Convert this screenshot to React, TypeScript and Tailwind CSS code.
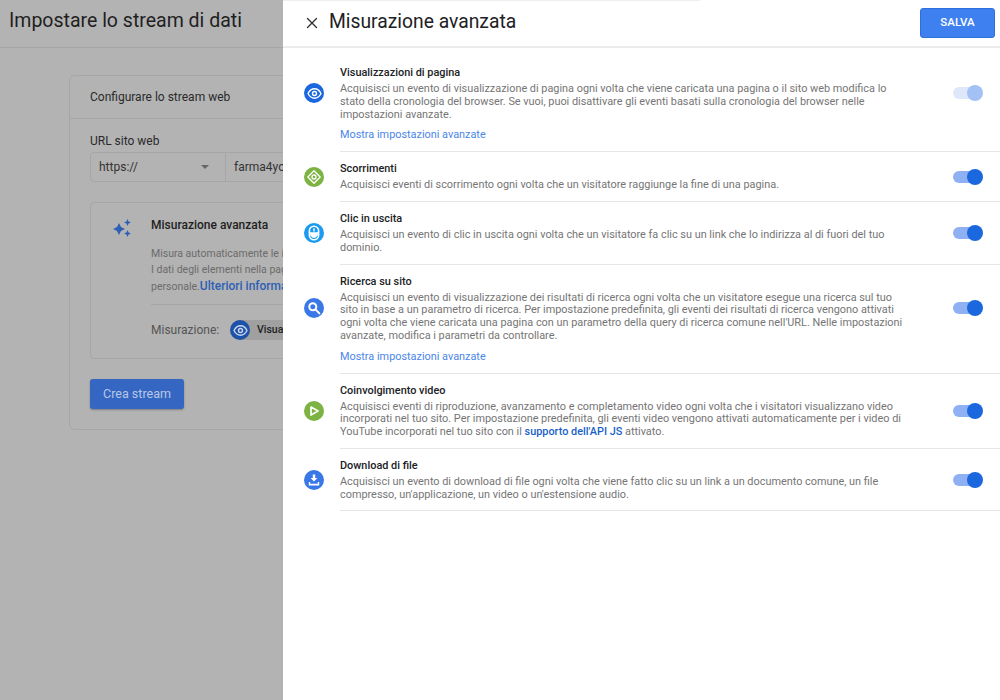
import { ReactNode } from 'react';
import { X } from 'lucide-react';

function EyeIcon({ color }: { color: string }) {
  return (
    <svg width="15" height="15" viewBox="0 0 15 15" fill="none" stroke={color}>
      <path d="M1 7.5 C3 3.6 5.2 2.8 7.5 2.8 C9.8 2.8 12 3.6 14 7.5 C12 11.4 9.8 12.2 7.5 12.2 C5.2 12.2 3 11.4 1 7.5 Z" strokeWidth="1.4" />
      <circle cx="7.5" cy="7.5" r="2" strokeWidth="1.4" />
    </svg>
  );
}

function ScrollIcon() {
  return (
    <svg width="16" height="16" viewBox="0 0 16 16" fill="none" stroke="white">
      <path d="M8 1.8 L14.2 8 L8 14.2 L1.8 8 Z" strokeWidth="1.3" strokeLinejoin="round" />
      <circle cx="8" cy="8" r="2" strokeWidth="1.3" />
    </svg>
  );
}

function MouseIcon() {
  return (
    <svg width="14" height="16" viewBox="0 0 14 16" fill="none" stroke="white">
      <rect x="2.4" y="1.2" width="9.2" height="13.6" rx="4.6" strokeWidth="1.6" />
      <path d="M7 3.2 V6.4" strokeWidth="1.4" />
      <path d="M3 7.6 H11 Q10.6 12.6 7 12.6 Q3.4 12.6 3 7.6 Z" fill="white" strokeWidth="0.6" />
    </svg>
  );
}

function SearchIcon() {
  return (
    <svg width="14" height="14" viewBox="0 0 14 14" fill="none" stroke="white" strokeWidth="2">
      <circle cx="5.8" cy="5.8" r="3.5" />
      <path d="M8.4 8.4 L12.4 12.4" strokeLinecap="round" />
    </svg>
  );
}

function PlayIcon() {
  return (
    <svg width="12" height="12" viewBox="0 0 12 12" fill="none" stroke="white" strokeWidth="1.7">
      <path d="M3 2 L10 6 L3 10 Z" strokeLinejoin="round" />
    </svg>
  );
}

function DownloadIcon() {
  return (
    <svg width="14" height="14" viewBox="0 0 14 14" fill="white">
      <path d="M5.8 1.5 H8.2 V5 H10.4 L7 8.6 L3.6 5 H5.8 Z" />
      <path d="M1.8 9 H3.2 V10.8 H10.8 V9 H12.2 V12.4 H1.8 Z" />
    </svg>
  );
}

function Toggle({ faded }: { faded?: boolean }) {
  return (
    <div className="relative w-[30px] h-4 mr-[17px] shrink-0">
      <div className={`absolute left-0 top-[2px] w-[26px] h-[12px] rounded-full ${faded ? 'bg-[#dfe8fb]' : 'bg-[#8fb0f3]'}`} />
      <div className={`absolute right-0 top-0 w-4 h-4 rounded-full ${faded ? 'bg-[#a3c1f5]' : 'bg-[#1a67de]'}`} />
    </div>
  );
}

function Row({ icon, color, title, lines, more, faded, first }: {
  icon: ReactNode; color: string; title: string; lines: ReactNode[]; more?: boolean; faded?: boolean; first?: boolean;
}) {
  return (
    <div>
      <div className={`${first ? 'pt-[17px]' : 'pt-[9px]'} pl-[21px]`}>
        <div className="flex items-center">
          <div className={`w-5 h-5 rounded-full flex items-center justify-center shrink-0 ${color}`}>{icon}</div>
          <div className="ml-4 flex-1">
            <div className="h-4 text-[10.9px] leading-4 font-medium text-[#202124]">{title}</div>
            <div className="mt-[2px] text-[10.88px] leading-[12.75px] text-[#757575]">
              {lines.map((l, i) => <div key={i} className="whitespace-nowrap">{l}</div>)}
            </div>
          </div>
          <Toggle faded={faded} />
        </div>
        {more && (
          <div className="ml-9 mt-[7px] h-[14px] text-[10.88px] leading-[14px] text-[#4a86e8]">Mostra impostazioni avanzate</div>
        )}
      </div>
      <div className="ml-[57px] mt-[9px] h-px bg-[#e6e6e6]" />
    </div>
  );
}

export default function App() {
  return (
    <div className="flex w-[1000px] h-[700px] overflow-hidden bg-white font-['Roboto',sans-serif]">
      {/* sfondo oscurato */}
      <div className="w-[283px] shrink-0 overflow-hidden bg-[#b3b3b3]">
        <div className="h-[48px] border-b border-[#a6a6a6] pl-[9px] flex items-center">
          <div className="text-[19.5px] text-[#1f1f1f] whitespace-nowrap pb-[6px]">Impostare lo stream di dati</div>
        </div>
        <div className="ml-[69px] mt-[27px] w-[500px] h-[355px] rounded-md border border-[#a6a6a6]">
          <div className="h-[43px] border-b border-[#a6a6a6] pl-5 flex items-center text-[12px] text-[#2a2a2a]">Configurare lo stream web</div>
          <div className="pl-5 pt-[14px]">
            <div className="h-[15px] text-[12px] leading-[15px] text-[#2a2a2a] mt-[1px]">URL sito web</div>
            <div className="mt-[3px] flex h-[30px] w-[470px] rounded border border-[#a6a6a6] text-[12px] text-[#333]">
              <div className="w-[135px] flex items-center justify-between pl-2 pr-4 border-r border-[#a6a6a6]">
                <span>https://</span>
                <span className="w-0 h-0 border-x-[4px] border-x-transparent border-t-[4px] border-t-[#666]" />
              </div>
              <div className="pl-2 flex items-center">farma4you.it</div>
            </div>
            <div className="mt-5 w-[470px] h-[157px] rounded border border-[#a6a6a6] flex">
              <div className="w-[60px] pl-[21px] pt-[15px] shrink-0">
                <svg width="20" height="20" viewBox="0 0 20 20" fill="#2f5fb5">
                  <path d="M7 5 L9 9 L13 11 L9 13 L7 17 L5 13 L1 11 L5 9 Z" />
                  <path d="M15.5 1 L16.6 3.4 L19 4.5 L16.6 5.6 L15.5 8 L14.4 5.6 L12 4.5 L14.4 3.4 Z" />
                  <path d="M15.5 12 L16.6 14.4 L19 15.5 L16.6 16.6 L15.5 19 L14.4 16.6 L12 15.5 L14.4 14.4 Z" />
                </svg>
              </div>
              <div className="flex-1 pt-[14px] whitespace-nowrap">
                <div className="text-[12px] leading-4 font-medium text-[#1f1f1f]">Misurazione avanzata</div>
                <div className="mt-[13px] text-[10.5px] leading-4 text-[#6b6b6b]">
                  <div>Misura automaticamente le interazioni e i contenuti</div>
                  <div>I dati degli elementi nella pagina potrebbero essere</div>
                  <div>personale.<span className="text-[12px] font-medium text-[#2f5fb5]">Ulteriori informazioni</span></div>
                </div>
                <div className="mt-[9px] h-px w-[380px] bg-[#a6a6a6]" />
                <div className="mt-[15px] flex items-center">
                  <span className="text-[12px] text-[#555] w-[79px]">Misurazione:</span>
                  <div className="flex items-center h-5 rounded-full bg-[#a0a0a0] pr-4">
                    <div className="w-5 h-5 rounded-full bg-[#1e52a8] flex items-center justify-center">
                      <EyeIcon color="#c9d6ee" />
                    </div>
                    <span className="ml-[7px] text-[10.5px] font-medium text-[#1f1f1f]">Visualizzazioni</span>
                  </div>
                </div>
              </div>
            </div>
            <div className="mt-5 w-[94px] h-[30px] rounded-[3px] bg-[#3566c2] shadow-[0_1px_2px_rgba(0,0,0,0.3)] flex items-center justify-center text-[12.5px] text-[#b8c8e6]">Crea stream</div>
          </div>
        </div>
      </div>

      {/* pannello */}
      <div className="flex-1 min-w-0 bg-white">
        <div className="h-px w-[417px] bg-[#eeeeee]" />
        <div className="h-[47px] flex items-center border-b-[2px] border-[#ececec]">
          <X size={18} color="#333" strokeWidth={1.8} className="ml-[20px] mb-[2px]" />
          <div className="ml-[8px] text-[19.3px] text-[#202124] whitespace-nowrap pb-[2px]">Misurazione avanzata</div>
          <div className="ml-auto mr-[5px] mb-[2px] w-[75px] h-[30px] rounded-[3px] bg-[#3f80f1] border border-[#2f6fdc] flex items-center justify-center text-[11.5px] font-medium text-white">SALVA</div>
        </div>
        <Row first faded more color="bg-[#1a67de]" icon={<EyeIcon color="white" />}
          title="Visualizzazioni di pagina"
          lines={[
            'Acquisisci un evento di visualizzazione di pagina ogni volta che viene caricata una pagina o il sito web modifica lo',
            'stato della cronologia del browser. Se vuoi, puoi disattivare gli eventi basati sulla cronologia del browser nelle',
            'impostazioni avanzate.',
          ]} />
        <Row color="bg-[#7cb342]" icon={<ScrollIcon />} title="Scorrimenti"
          lines={['Acquisisci eventi di scorrimento ogni volta che un visitatore raggiunge la fine di una pagina.']} />
        <Row color="bg-[#1a9af0]" icon={<MouseIcon />} title="Clic in uscita"
          lines={[
            'Acquisisci un evento di clic in uscita ogni volta che un visitatore fa clic su un link che lo indirizza al di fuori del tuo',
            'dominio.',
          ]} />
        <Row more color="bg-[#3b78e7]" icon={<SearchIcon />} title="Ricerca su sito"
          lines={[
            'Acquisisci un evento di visualizzazione dei risultati di ricerca ogni volta che un visitatore esegue una ricerca sul tuo',
            'sito in base a un parametro di ricerca. Per impostazione predefinita, gli eventi dei risultati di ricerca vengono attivati',
            "ogni volta che viene caricata una pagina con un parametro della query di ricerca comune nell'URL. Nelle impostazioni",
            'avanzate, modifica i parametri da controllare.',
          ]} />
        <Row color="bg-[#7cb342]" icon={<PlayIcon />} title="Coinvolgimento video"
          lines={[
            'Acquisisci eventi di riproduzione, avanzamento e completamento video ogni volta che i visitatori visualizzano video',
            'incorporati nel tuo sito. Per impostazione predefinita, gli eventi video vengono attivati automaticamente per i video di',
            <>YouTube incorporati nel tuo sito con il <span className="font-medium text-[#1a5fc7]">supporto dell'API JS</span> attivato.</>,
          ]} />
        <Row color="bg-[#3b78e7]" icon={<DownloadIcon />} title="Download di file"
          lines={[
            'Acquisisci un evento di download di file ogni volta che viene fatto clic su un link a un documento comune, un file',
            "compresso, un'applicazione, un video o un'estensione audio.",
          ]} />
      </div>
    </div>
  );
}
